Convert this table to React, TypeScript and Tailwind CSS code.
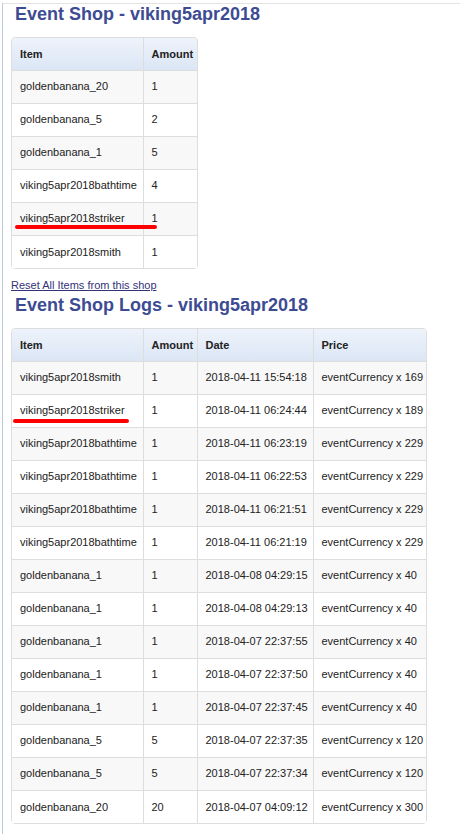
import React from "react";

type Row = string[];

const shopItems: Row[] = [
  ["goldenbanana_20", "1"],
  ["goldenbanana_5", "2"],
  ["goldenbanana_1", "5"],
  ["viking5apr2018bathtime", "4"],
  ["viking5apr2018striker", "1"],
  ["viking5apr2018smith", "1"],
];

const logs: Row[] = [
  ["viking5apr2018smith", "1", "2018-04-11 15:54:18", "eventCurrency x 169"],
  ["viking5apr2018striker", "1", "2018-04-11 06:24:44", "eventCurrency x 189"],
  ["viking5apr2018bathtime", "1", "2018-04-11 06:23:19", "eventCurrency x 229"],
  ["viking5apr2018bathtime", "1", "2018-04-11 06:22:53", "eventCurrency x 229"],
  ["viking5apr2018bathtime", "1", "2018-04-11 06:21:51", "eventCurrency x 229"],
  ["viking5apr2018bathtime", "1", "2018-04-11 06:21:19", "eventCurrency x 229"],
  ["goldenbanana_1", "1", "2018-04-08 04:29:15", "eventCurrency x 40"],
  ["goldenbanana_1", "1", "2018-04-08 04:29:13", "eventCurrency x 40"],
  ["goldenbanana_1", "1", "2018-04-07 22:37:55", "eventCurrency x 40"],
  ["goldenbanana_1", "1", "2018-04-07 22:37:50", "eventCurrency x 40"],
  ["goldenbanana_1", "1", "2018-04-07 22:37:45", "eventCurrency x 40"],
  ["goldenbanana_5", "5", "2018-04-07 22:37:35", "eventCurrency x 120"],
  ["goldenbanana_5", "5", "2018-04-07 22:37:34", "eventCurrency x 120"],
  ["goldenbanana_20", "20", "2018-04-07 04:09:12", "eventCurrency x 300"],
];

interface DataTableProps {
  headers: string[];
  widths: string[];
  tableWidth: string;
  rows: Row[];
  // row index -> red mark under the item name
  marks?: Record<number, { left: string; top: string; width: string }>;
}

function DataTable({ headers, widths, tableWidth, rows, marks = {} }: DataTableProps) {
  return (
    <div className="border border-[#dddddd] rounded-[4px] w-fit">
      <table
        className={
          "border-collapse table-fixed text-[11px] text-[#222222] " + tableWidth
        }
      >
        <colgroup>
          {widths.map((w, i) => (
            <col key={i} className={w} />
          ))}
        </colgroup>
        <thead>
          <tr className="bg-gradient-to-b from-[#eef3fb] to-[#dbe6f5]">
            {headers.map((h, i) => (
              <th
                key={h}
                className={
                  "h-[32px] px-[8px] text-left font-bold border-b border-[#dddddd] " +
                  (i < headers.length - 1 ? "border-r " : "") +
                  (i === 0 ? "rounded-tl-[4px] " : "") +
                  (i === headers.length - 1 ? "rounded-tr-[4px]" : "")
                }
              >
                {h}
              </th>
            ))}
          </tr>
        </thead>
        <tbody>
          {rows.map((row, r) => (
            <tr key={r} className={r % 2 === 0 ? "bg-[#f8f8f8]" : "bg-white"}>
              {row.map((cell, c) => (
                <td
                  key={c}
                  className={
                    "h-[33px] px-[8px] whitespace-nowrap border-[#dddddd] " +
                    (c < row.length - 1 ? "border-r " : "") +
                    (r < rows.length - 1 ? "border-b " : "") +
                    (c === 0 ? "relative" : "")
                  }
                >
                  {cell}
                  {c === 0 && marks[r] && (
                    <span
                      className="absolute h-[4px] rounded-full bg-[#ff0000]"
                      style={marks[r]}
                    />
                  )}
                </td>
              ))}
            </tr>
          ))}
        </tbody>
      </table>
    </div>
  );
}

export default function App() {
  return (
    <div
      className="min-h-[834px] bg-white ml-[2px] border-l border-[#bccbdd]"
      style={{ fontFamily: '"Liberation Sans", Arial, sans-serif' }}
    >
      <div className="mt-[3px] border-t border-[#e3e3e3] pl-[8px] pb-[10px]">
        <h1 className="pl-[4px] text-[18px] leading-[20px] font-bold text-[#3d4b93]">
          Event Shop - viking5apr2018
        </h1>

        <div className="mt-[13px]">
          <DataTable
            headers={["Item", "Amount"]}
            widths={["w-[131px]", "w-[54px]"]}
            tableWidth="w-[185px]"
            rows={shopItems}
            marks={{ 4: { left: "3px", top: "22px", width: "142px" } }}
          />
        </div>

        <a
          href="#"
          className="block mt-[9px] text-[11px] leading-[14px] underline text-[#33337a] w-fit"
        >
          Reset All Items from this shop
        </a>

        <h2 className="mt-[3px] pl-[4px] text-[18px] leading-[20px] font-bold text-[#3d4b93]">
          Event Shop Logs - viking5apr2018
        </h2>

        <div className="mt-[13px]">
          <DataTable
            headers={["Item", "Amount", "Date", "Price"]}
            widths={["w-[131px]", "w-[54px]", "w-[116px]", "w-[113px]"]}
            tableWidth="w-[414px]"
            rows={logs}
            marks={{ 1: { left: "1px", top: "24px", width: "116px" } }}
          />
        </div>
      </div>
    </div>
  );
}
